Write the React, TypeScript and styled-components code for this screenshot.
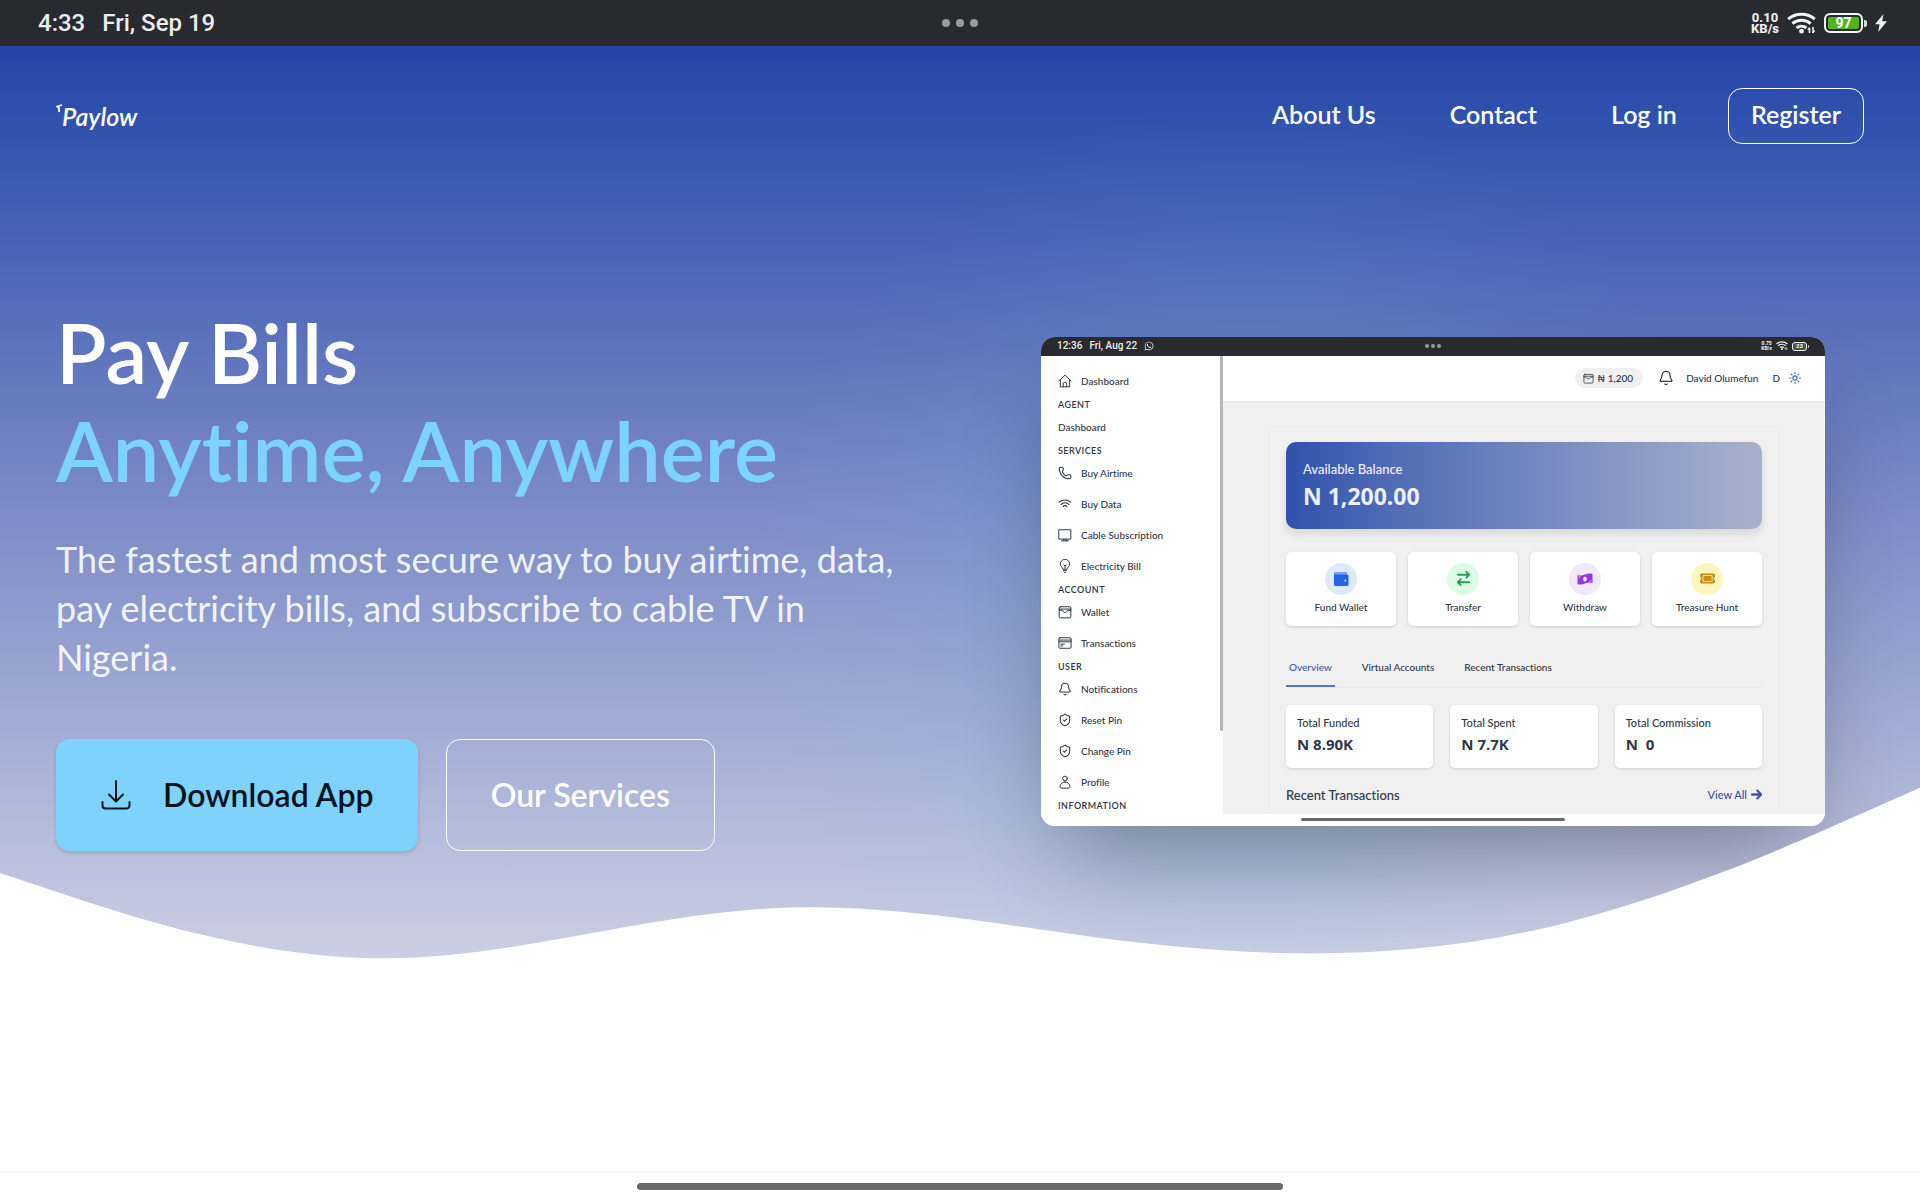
import React from "react";
import styled, { createGlobalStyle } from "styled-components";
import { Bell, Phone, ShieldCheck, Wifi } from "lucide-react";
import { FaArrowRight, FaArrowRightArrowLeft, FaTicket, FaWhatsapp } from "react-icons/fa6";

const sans = `Lato, "Open Sans", sans-serif`;
const device = `Roboto, "Liberation Sans", sans-serif`;
const figures = `"Noto Sans", "Open Sans", sans-serif`;

const GlobalStyle = createGlobalStyle`
  *, *::before, *::after { box-sizing: border-box; }
  body { margin: 0; background: #fff; font-family: ${sans}; font-variant-ligatures: none; }
  h1, h2, p { margin: 0; padding: 0; }
  a { color: inherit; text-decoration: none; }
  button { font: inherit; color: inherit; border: 0; background: none; padding: 0; cursor: pointer; }
  svg { display: block; flex: none; }
`;

const Screen = styled.div`
  min-height: 100vh;
  display: flex;
  flex-direction: column;
`;

/* ---------- system bar ---------- */

const SystemBar = styled.div<{ $small?: boolean }>`
  display: grid;
  grid-template-columns: 1fr auto 1fr;
  align-items: center;
  height: ${(p) => (p.$small ? 19 : 46)}px;
  padding: 0 ${(p) => (p.$small ? 16 : 33)}px;
  background: #292a2f;
  color: #ececec;
  font-family: ${device};
  font-weight: 500;
  font-size: ${(p) => (p.$small ? 10 : 24)}px;
  line-height: 1;
`;

const Clock = styled.div<{ $small?: boolean }>`
  display: flex;
  align-items: center;
  gap: ${(p) => (p.$small ? 7 : 17)}px;
  padding-left: ${(p) => (p.$small ? 0 : 5)}px;
`;

const Dots = styled.div<{ $small?: boolean }>`
  display: flex;
  gap: ${(p) => (p.$small ? 2 : 6)}px;

  i {
    width: ${(p) => (p.$small ? 4 : 8)}px;
    height: ${(p) => (p.$small ? 4 : 8)}px;
    border-radius: 50%;
    background: #9b9b9f;
  }
`;

const Indicators = styled.div<{ $small?: boolean }>`
  display: flex;
  justify-content: flex-end;
  align-items: center;
  gap: ${(p) => (p.$small ? 4 : 8)}px;
`;

const Speed = styled.span<{ $small?: boolean }>`
  font-size: ${(p) => (p.$small ? 5 : 13)}px;
  line-height: ${(p) => (p.$small ? 5 : 11)}px;
  font-weight: 800;
  text-align: center;
  white-space: pre-line;
`;

const Battery = styled.span<{ $small?: boolean }>`
  display: flex;
  align-items: center;

  b {
    display: grid;
    place-items: center;
    width: ${(p) => (p.$small ? 15 : 39)}px;
    height: ${(p) => (p.$small ? 9 : 20)}px;
    border: ${(p) => (p.$small ? 1 : 2)}px solid #f4f4f4;
    border-radius: ${(p) => (p.$small ? 3 : 6)}px;
    background: ${(p) => (p.$small ? "#4b4c50" : "#55b41c")};
    box-shadow: ${(p) => (p.$small ? "none" : "inset 0 0 0 2px #292a2f")};
    color: #fff;
    font-size: ${(p) => (p.$small ? 6 : 14)}px;
    font-weight: 700;
  }

  &::after {
    content: "";
    width: ${(p) => (p.$small ? 1 : 3)}px;
    height: ${(p) => (p.$small ? 3 : 7)}px;
    margin-left: 1px;
    background: #d8d8d8;
    border-radius: 0 2px 2px 0;
  }
`;

const SignalIcon = ({ size }: { size: number }) => (
  <svg width={size} height={(size * 22) / 29} viewBox="0 0 29 22" fill="none" stroke="#f4f4f4" strokeWidth="3" aria-hidden="true">
    <path d="M1.2 7.2C8.500.6 20.500.6 27.800 7.200" />
    <path d="M5.400 11.700C10.500 7.200 18.500 7.200 23.600 11.700" />
    <path d="M9.600 16C12.400 13.700 16.600 13.700 19.400 16" />
    <circle cx="14.500" cy="19.200" r="2.400" fill="#f4f4f4" stroke="none" />
    <path d="M22.500 21v-5M26 15v6" strokeWidth="1.600" />
    <path d="M20.800 18l1.700-2.500M27.700 18.500L26 21" strokeWidth="1.200" />
  </svg>
);

const Bolt = () => (
  <svg width="12" height="18" viewBox="0 0 12 18" fill="#f0f0f0" aria-hidden="true">
    <path d="M8.500 0L0 10.300h4.600L3.200 18 12 7.300H7.200z" />
  </svg>
);

/* ---------- hero ---------- */

const Hero = styled.main`
  position: relative;
  z-index: 0;
  flex: 1;
  overflow: hidden;
  background: linear-gradient(180deg, #2346a9 0%, #7c8bc7 41%, #d9dbe9 88%);
`;

const Glow = styled.div`
  position: absolute;
  z-index: -1;
  right: 170px;
  top: 54px;
  width: 1000px;
  height: 1000px;
  background: radial-gradient(closest-side, rgba(110, 175, 215, 0.28), rgba(110, 180, 215, 0.19) 42%, rgba(120, 190, 225, 0.04) 78%, rgba(125, 211, 252, 0));
`;

const Wave = styled.svg`
  position: absolute;
  z-index: 1;
  left: 0;
  bottom: 0;
  width: 100%;
  height: auto;
  pointer-events: none;
`;

const Header = styled.header`
  display: flex;
  justify-content: space-between;
  align-items: center;
  padding: 42px 56px;
  color: #fff;
`;

const Logo = styled.a`
  display: flex;
  align-items: flex-start;
  font-size: 25px;
  line-height: 30px;
  font-style: italic;
  font-weight: 600;
`;

const Nav = styled.nav`
  display: flex;
  align-items: baseline;
  gap: 74px;
  font-size: 25px;
  font-weight: 600;
  line-height: 35px;
`;

const RegisterLink = styled.a`
  margin-left: -23px;
  padding: 8px 22px 11px;
  border: 1px solid #fff;
  border-radius: 14px;
`;

const Columns = styled.div`
  display: grid;
  grid-template-columns: 1fr 1fr;
  gap: 84px;
  align-items: center;
  padding: 117px 56px 0;
`;

const Title = styled.h1`
  color: #fff;
  font-size: 83px;
  line-height: 98px;
  font-weight: 600;

  span {
    display: block;
    color: #7dd3fc;
    white-space: nowrap;
  }
`;

const Lead = styled.p`
  margin-top: 36px;
  max-width: 862px;
  color: rgba(255, 255, 255, 0.9);
  font-size: 36px;
  line-height: 49px;
`;

const Actions = styled.div`
  display: flex;
  gap: 28px;
  margin-top: 57px;
  position: relative;
  z-index: 2;
`;

const Action = styled.button<{ $filled?: boolean }>`
  display: flex;
  align-items: center;
  justify-content: center;
  gap: 31px;
  height: 112px;
  padding: 0 44px 2px;
  border-radius: 14px;
  border: ${(p) => (p.$filled ? "0" : "1px solid #fff")};
  background: ${(p) => (p.$filled ? "#7dd3fc" : "transparent")};
  box-shadow: ${(p) => (p.$filled ? "0 2px 4px rgba(0, 0, 0, 0.14)" : "none")};
  color: ${(p) => (p.$filled ? "#04121c" : "#fff")};
  font-size: 32px;
  font-weight: 600;
`;

/* ---------- product preview ---------- */

const Preview = styled.section`
  justify-self: center;
  width: 100%;
  max-width: 784px;
  margin-top: 8px;
  overflow: hidden;
  border-radius: 14px;
  background: #fff;
  box-shadow: 0 44px 88px -21px rgba(0, 0, 0, 0.32);
  color: #2f3845;
  font-size: 10px;
  font-weight: 500;
  line-height: 14px;
`;

const PreviewBody = styled.div`
  display: grid;
  grid-template-columns: 182px 1fr;
`;

const Side = styled.nav`
  display: grid;
  grid-template-columns: 1fr 3px;
`;

const SideList = styled.div`
  padding: 10px 0 0 17px;
`;

const ScrollThumb = styled.div`
  height: 375px;
  background: #b3b6bc;
  border-radius: 0 0 2px 2px;
`;

const SideHeading = styled.h2`
  font-size: 9px;
  line-height: 15px;
  font-weight: 600;
  letter-spacing: 0.05em;
`;

const SideLink = styled.a`
  display: flex;
  align-items: center;
  gap: 9px;
  height: 31px;
`;

const Panel = styled.div`
  display: flex;
  flex-direction: column;
  background: #f0f0f0;
`;

const Top = styled.div`
  display: flex;
  align-items: center;
  justify-content: flex-end;
  height: 46px;
  padding: 0 24px 0 16px;
  background: #fff;
  border-bottom: 1px solid #e6e6e6;
`;

const Chip = styled.span`
  display: flex;
  align-items: center;
  gap: 3px;
  height: 20px;
  padding: 0 10px 0 8px;
  margin-right: 15px;
  border-radius: 10px;
  background: #f0f0f0;
`;

const UserName = styled.span`
  margin: 0 14px 0 12px;
`;

const Initial = styled.span`
  margin-right: 9px;
`;

const Content = styled.div`
  margin: 24px 45px 0;
  padding: 15px 17px 11px;
  border: 1px solid #ececee;
  border-bottom: 0;
`;

const Balance = styled.div`
  height: 87px;
  padding: 19px 17px;
  border-radius: 10px;
  background: linear-gradient(90deg, #3152ad 0%, #5370b6 25%, #7a8cc2 58%, #a9b1cc 100%);
  box-shadow: 0 5px 9px rgba(0, 0, 0, 0.1);
  color: #efeffc;
  font-size: 13px;
  line-height: 16px;
`;

const Amount = styled.p<{ $large?: boolean }>`
  font-family: ${figures};
  font-weight: 700;
  font-size: ${(p) => (p.$large ? 23 : 15)}px;
  line-height: ${(p) => (p.$large ? 38 : 28)}px;
`;

const Cards = styled.div<{ $count: number; $gap: number }>`
  display: grid;
  grid-template-columns: repeat(${(p) => p.$count}, 1fr);
  gap: ${(p) => p.$gap}px;
`;

const Shortcut = styled.button`
  display: flex;
  flex-direction: column;
  align-items: center;
  gap: 5px;
  height: 74px;
  margin-top: 23px;
  padding-top: 11px;
  border-radius: 5px;
  background: #fff;
  box-shadow: 0 1px 3px rgba(0, 0, 0, 0.14);
`;

const Disc = styled.span<{ $bg: string; $fg: string }>`
  display: grid;
  place-items: center;
  width: 32px;
  height: 32px;
  border-radius: 50%;
  background: ${(p) => p.$bg};
  color: ${(p) => p.$fg};
  font-size: 15px;
`;

const Tabs = styled.div`
  display: flex;
  gap: 24px;
  margin: 26px 0 17px;
  border-bottom: 1px solid #e9e9eb;
`;

const Tab = styled.button<{ $active?: boolean }>`
  height: 35px;
  padding: 0 3px 3px;
  border-bottom: 2px solid ${(p) => (p.$active ? "#5b74ba" : "transparent")};
  color: ${(p) => (p.$active ? "#3d57ad" : "inherit")};
`;

const Stat = styled.div`
  height: 63px;
  padding: 11px;
  border-radius: 5px;
  background: #fff;
  box-shadow: 0 1px 3px rgba(0, 0, 0, 0.14);
  font-size: 11px;
`;

const Recent = styled.div`
  display: flex;
  justify-content: space-between;
  align-items: center;
  margin-top: 19px;
  font-size: 13px;
  line-height: 16px;

  a {
    display: flex;
    align-items: center;
    gap: 4px;
    color: #3350a8;
    font-size: 11px;
  }

  svg {
    width: 11px;
    height: 13px;
    stroke: currentColor;
    stroke-width: 30px;
  }
`;

const HomeStrip = styled.div<{ $small?: boolean }>`
  display: flex;
  justify-content: center;
  align-items: center;
  height: ${(p) => (p.$small ? 12 : 28)}px;
  border-top: ${(p) => (p.$small ? "0" : "1px solid #f9f9f9")};
  background: #fff;

  i {
    width: 33.6%;
    height: ${(p) => (p.$small ? 3 : 7)}px;
    border-radius: 4px;
    background: #696969;
  }
`;

/* ---------- line icons ---------- */

const Line = ({ size = 14, children }: { size?: number; children: React.ReactNode }) => (
  <svg width={size} height={size} viewBox="0 0 24 24" fill="none" stroke="currentColor" strokeWidth="1.700" strokeLinecap="round" strokeLinejoin="round" aria-hidden="true">
    {children}
  </svg>
);

const HomeIcon = () => (
  <Line>
    <path d="M1.500 12L12 2l10.500 10M4 10v12h16V10M9 22v-5a3 3 0 0 1 6 0v5" />
  </Line>
);
const ScreenIcon = () => (
  <Line>
    <path d="M2 3h20v16H2zM6 22h12M10 19v3M14 19v3" />
  </Line>
);
const BulbIcon = () => (
  <Line>
    <path d="M8.500 17C8 14 4 13 4 8.500a8 8 0 0 1 16 0C20 13 16 14 15.500 17zM9.500 20h5M11 23h2M12 16v-5M10 10l2 2 2-2" />
  </Line>
);
const WalletIcon = ({ size }: { size?: number }) => (
  <Line size={size}>
    <rect x="2" y="3" width="20" height="19" rx="2" />
    <path d="M2 7h20M2 9h6c.5 5 7.500 5 8 0h6" />
  </Line>
);
const CardIcon = () => (
  <Line>
    <rect x="1.500" y="3" width="21" height="18" rx="2" />
    <path d="M2 7h20M2 10h20M5 14h6M5 17h3" />
  </Line>
);
const ProfileIcon = () => (
  <Line>
    <circle cx="12" cy="6" r="4" />
    <path d="M12 12c-5 0-8.500 4-8.500 8 0 2 1 2.500 3 2.500h11c2 0 3-.5 3-2.500 0-4-3.500-8-8.500-8z" />
  </Line>
);
const SunIcon = () => (
  <svg width="12" height="12" viewBox="0 0 24 24" fill="none" stroke="#3f63b5" strokeWidth="2.200" strokeLinecap="round" aria-hidden="true">
    <circle cx="12" cy="12" r="4.200" />
    <path d="M12 1v2.500M12 20.500V23M1 12h2.500M20.500 12H23M4.200 4.200L6 6M18 18l1.800 1.800M4.200 19.800L6 18M18 6l1.800-1.800" />
  </svg>
);
const WalletSolid = () => (
  <svg width="16" height="16" viewBox="0 0 16 16" fill="currentColor" aria-hidden="true">
    <path d="M2 1h11a1 1 0 0 1 1 1v2H1V2a1 1 0 0 1 1-1z" opacity=".55" />
    <path d="M1 3.500h13a1.500 1.500 0 0 1 1.500 1.500v8.500A1.500 1.500 0 0 1 14 15H2.500A1.500 1.500 0 0 1 1 13.500z" />
    <circle cx="12.300" cy="9.500" r="1" fill="#dbeafe" />
  </svg>
);
const BanknoteIcon = () => (
  <svg width="16" height="14" viewBox="0 0 16 14" fill="currentColor" aria-hidden="true">
    <path d="M.5 3C3 4 5 3.500 8 2.500S13 1.200 15.500 2v9c-2.500-1-4.500-.5-7.500.5S3 13 .5 12z" />
    <ellipse cx="8" cy="7" rx="1.900" ry="2.600" fill="#f0e9fb" />
    <path d="M1.500 5.200a1.500 1.500 0 0 0 1.500-1M14.500 8.800a1.500 1.500 0 0 0-1.500 1" stroke="#f0e9fb" fill="none" strokeWidth=".8" />
  </svg>
);
const DownloadIcon = () => (
  <svg width="32" height="32" viewBox="0 0 32 32" fill="none" stroke="currentColor" strokeWidth="2" strokeLinecap="round" strokeLinejoin="round" aria-hidden="true">
    <path d="M16 3v20M9 16.500l7 7 7-7M2.500 24v3.500a3 3 0 0 0 3 3h21a3 3 0 0 0 3-3V24" />
  </svg>
);

const lucide = { size: 14, strokeWidth: 1.8, "aria-hidden": true } as const;

type Entry = { label: string; icon?: React.ReactNode };
type Group = { heading?: string; entries: Entry[] };

const groups: Group[] = [
  { entries: [{ label: "Dashboard", icon: <HomeIcon /> }] },
  { heading: "AGENT", entries: [{ label: "Dashboard" }] },
  {
    heading: "SERVICES",
    entries: [
      { label: "Buy Airtime", icon: <Phone {...lucide} /> },
      { label: "Buy Data", icon: <Wifi {...lucide} /> },
      { label: "Cable Subscription", icon: <ScreenIcon /> },
      { label: "Electricity Bill", icon: <BulbIcon /> },
    ],
  },
  {
    heading: "ACCOUNT",
    entries: [
      { label: "Wallet", icon: <WalletIcon /> },
      { label: "Transactions", icon: <CardIcon /> },
    ],
  },
  {
    heading: "USER",
    entries: [
      { label: "Notifications", icon: <Bell {...lucide} /> },
      { label: "Reset Pin", icon: <ShieldCheck {...lucide} /> },
      { label: "Change Pin", icon: <ShieldCheck {...lucide} /> },
      { label: "Profile", icon: <ProfileIcon /> },
    ],
  },
  { heading: "INFORMATION", entries: [] },
];

const shortcuts = [
  { label: "Fund Wallet", bg: "#dbeafe", fg: "#2563eb", icon: <WalletSolid /> },
  { label: "Transfer", bg: "#dcfce7", fg: "#2a9d58", icon: <FaArrowRightArrowLeft /> },
  { label: "Withdraw", bg: "#f0e9fb", fg: "#9333ea", icon: <BanknoteIcon /> },
  { label: "Treasure Hunt", bg: "#fef6bd", fg: "#ca8f14", icon: <FaTicket /> },
];

const stats = [
  { label: "Total Funded", value: "N 8.90K" },
  { label: "Total Spent", value: "N 7.7K" },
  { label: "Total Commission", value: "N\u00a0 0" },
];

const DashboardPreview = () => (
  <Preview aria-label="Dashboard preview">
    <SystemBar $small>
      <Clock $small>
        <span>12:36</span>
        <span>Fri, Aug 22</span>
        <FaWhatsapp />
      </Clock>
      <Dots $small><i /><i /><i /></Dots>
      <Indicators $small>
        <Speed $small>{"0.75\nKB/s"}</Speed>
        <SignalIcon size={12} />
        <Battery $small><b>23</b></Battery>
      </Indicators>
    </SystemBar>
    <PreviewBody>
      <Side>
        <SideList>
          {groups.map((g, i) => (
            <React.Fragment key={i}>
              {g.heading && <SideHeading>{g.heading}</SideHeading>}
              {g.entries.map((e) => (
                <SideLink href="#" key={e.label}>
                  {e.icon}
                  {e.label}
                </SideLink>
              ))}
            </React.Fragment>
          ))}
        </SideList>
        <ScrollThumb />
      </Side>
      <Panel>
        <Top>
          <Chip>
            <WalletIcon size={11} />
            ₦ 1,200
          </Chip>
          <Bell size={16} strokeWidth={1.8} aria-hidden />
          <UserName>David Olumefun</UserName>
          <Initial>D</Initial>
          <SunIcon />
        </Top>
        <Content>
          <Balance>
            <p>Available Balance</p>
            <Amount $large>N 1,200.00</Amount>
          </Balance>
          <Cards $count={4} $gap={12}>
            {shortcuts.map((s) => (
              <Shortcut key={s.label}>
                <Disc $bg={s.bg} $fg={s.fg}>{s.icon}</Disc>
                {s.label}
              </Shortcut>
            ))}
          </Cards>
          <Tabs>
            <Tab $active>Overview</Tab>
            <Tab>Virtual Accounts</Tab>
            <Tab>Recent Transactions</Tab>
          </Tabs>
          <Cards $count={3} $gap={17}>
            {stats.map((s) => (
              <Stat key={s.label}>
                <p>{s.label}</p>
                <Amount>{s.value}</Amount>
              </Stat>
            ))}
          </Cards>
          <Recent>
            <span>Recent Transactions</span>
            <a href="#">View All <FaArrowRight /></a>
          </Recent>
        </Content>
      </Panel>
    </PreviewBody>
    <HomeStrip $small><i /></HomeStrip>
  </Preview>
);

export default function App() {
  return (
    <Screen>
      <GlobalStyle />
      <SystemBar>
        <Clock>
          <span>4:33</span>
          <span>Fri, Sep 19</span>
        </Clock>
        <Dots><i /><i /><i /></Dots>
        <Indicators>
          <Speed>{"0.10\nKB/s"}</Speed>
          <SignalIcon size={29} />
          <Battery><b>97</b></Battery>
          <Bolt />
        </Indicators>
      </SystemBar>
      <Hero>
        <Glow />
        <Header>
          <Logo href="#">
            <svg width="6" height="14" viewBox="0 0 6 14" fill="none" stroke="#fff" strokeWidth="1.800" strokeLinejoin="round" aria-hidden="true">
              <path d="M6 4L1 5.500l1.800 1.200.4 4.300" />
            </svg>
            Paylow
          </Logo>
          <Nav>
            <a href="#">About Us</a>
            <a href="#">Contact</a>
            <a href="#">Log in</a>
            <RegisterLink href="#">Register</RegisterLink>
          </Nav>
        </Header>
        <Columns>
          <div>
            <Title>
              Pay Bills <span>Anytime, Anywhere</span>
            </Title>
            <Lead>
              The fastest and most secure way to buy airtime, data, pay electricity bills, and subscribe to cable TV in
              Nigeria.
            </Lead>
            <Actions>
              <Action $filled>
                <DownloadIcon />
                Download App
              </Action>
              <Action>Our Services</Action>
            </Actions>
          </div>
          <DashboardPreview />
        </Columns>
        <Wave viewBox="0 0 1440 320" aria-hidden="true">
          <path
            fill="#fff"
            d="M0,96L48,112C96,128,192,160,288,160C384,160,480,128,576,122.7C672,117,768,139,864,149.3C960,160,1056,160,1152,138.7C1248,117,1344,75,1392,53.3L1440,32L1440,320L0,320Z"
          />
        </Wave>
      </Hero>
      <HomeStrip><i /></HomeStrip>
    </Screen>
  );
}
